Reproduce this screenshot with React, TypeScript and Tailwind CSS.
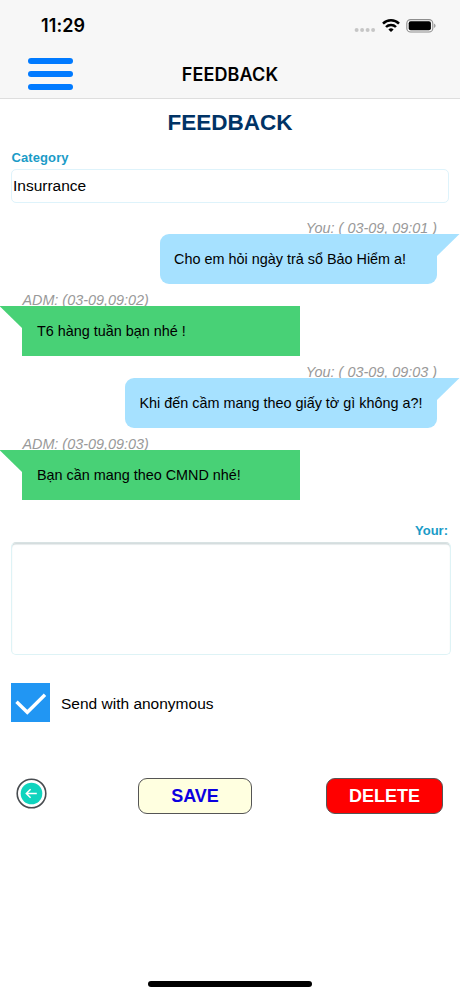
import { useState } from 'react';
import clsx from 'clsx';

type Message = {
  id: number;
  from: 'you' | 'adm';
  caption: string;
  text: string;
};

const messages: Message[] = [
  { id: 1, from: 'you', caption: 'You: ( 03-09, 09:01 )', text: 'Cho em hỏi ngày trả sổ Bảo Hiểm a!' },
  { id: 2, from: 'adm', caption: 'ADM: (03-09,09:02)', text: 'T6 hàng tuần bạn nhé !' },
  { id: 3, from: 'you', caption: 'You: ( 03-09, 09:03 )', text: 'Khi đến cầm mang theo giấy tờ gì không a?!' },
  { id: 4, from: 'adm', caption: 'ADM: (03-09,09:03)', text: 'Bạn cần mang theo CMND nhé!' },
];

function StatusBar() {
  return (
    <div className="flex h-[50px] items-center justify-between pl-[41px] pr-[24px] pt-px">
      <span className="font-['Inter',sans-serif] text-[18px] font-semibold tracking-[0.1px]">11:29</span>
      <div className="flex items-center">
        <svg width="22" height="14" viewBox="0 0 22 14" fill="#c6c6c6">
          <circle cx="2.6" cy="11" r="2" />
          <circle cx="8.1" cy="11" r="2" />
          <circle cx="13.6" cy="11" r="2" />
          <circle cx="19.1" cy="11" r="2" />
        </svg>
        <svg className="ml-[6px]" width="18" height="14" viewBox="0 0 18 14" fill="none" stroke="#000" strokeWidth="2.5">
          <path d="M1 4.6a11.4 11.4 0 0 1 16 0" />
          <path d="M4 8a7 7 0 0 1 10 0" />
          <path d="M9 12.9 6.4 10.4a3.8 3.8 0 0 1 5.2 0z" fill="#000" stroke="none" />
        </svg>
        <svg className="ml-[6px]" width="30" height="14" viewBox="0 0 30 14">
          <rect x="0.8" y="0.6" width="26" height="12.4" rx="3.8" fill="none" stroke="#8e8e8e" strokeWidth="1.1" />
          <rect x="2.7" y="2.3" width="22.2" height="9" rx="2" fill="#000" />
          <path d="M28.2 4.6v4.4c1.8-.7 1.8-3.7 0-4.4z" fill="#8e8e8e" />
        </svg>
      </div>
    </div>
  );
}

function NavBar() {
  return (
    <div className="grid h-12 grid-cols-[1fr_auto_1fr] items-center">
      <button type="button" aria-label="Menu" className="ml-7 flex w-[45px] flex-col gap-[7px]">
        <span className="h-[6.3px] rounded-full bg-[#007aff]" />
        <span className="h-[6.3px] rounded-full bg-[#007aff]" />
        <span className="h-[6.3px] rounded-full bg-[#007aff]" />
      </button>
      <span className="font-['Inter',sans-serif] text-[18px] font-semibold tracking-[0.1px]">FEEDBACK</span>
    </div>
  );
}

function ChatMessage({ message }: { message: Message }) {
  const mine = message.from === 'you';

  return (
    <div className={clsx('flex h-[72px] flex-col', mine ? 'items-end pr-[23px]' : 'items-start pl-[22.4px]')}>
      <span className="h-[22px] whitespace-pre pt-[6px] text-[14.4px] leading-[20px] text-[#999] italic">
        {message.caption}
      </span>
      <div
        className={clsx(
          'relative flex h-[50px] min-w-[277.4px] items-center px-[14.5px] pt-px text-[14.4px] whitespace-nowrap',
          mine ? 'rounded-[9px] rounded-tr-none bg-[#a6e1ff]' : 'bg-[#48d176]',
        )}
      >
        {/* speech tail */}
        <svg
          className={clsx('absolute top-0', mine ? 'left-full -ml-px' : 'right-full -mr-px -scale-x-100')}
          width="24"
          height="22"
          viewBox="0 0 24 22"
          fill={mine ? '#a6e1ff' : '#48d176'}
        >
          <path d="M0 0h23.5L1 22H0z" />
        </svg>
        {message.text}
      </div>
    </div>
  );
}

export default function App() {
  const [anonymous, setAnonymous] = useState(true);
  const [feedback, setFeedback] = useState('');

  return (
    <div className="flex h-[996px] w-[460px] flex-col overflow-hidden bg-white font-['Liberation_Sans',Arial,sans-serif] text-black">
      <header className="h-[99px] border-b border-[#dedede] bg-[#f7f7f7]">
        <StatusBar />
        <NavBar />
      </header>

      <main className="flex flex-1 flex-col">
        <h1 className="mt-[9px] text-center text-[22.5px] leading-[30px] font-bold text-[#003366]">FEEDBACK</h1>

        <label className="mt-[11px] ml-[11.5px] text-[13px] leading-[18px] font-bold tracking-[0.1px] text-[#1a9bc7]">
          Category
        </label>
        <div className="mt-[2px] mr-[11px] ml-[11px] flex h-[34px] items-center rounded-[5px] border border-[#def3fb] px-px text-[15.5px]">
          Insurrance
        </div>

        <section className="mt-[9px]">
          {messages.map((m) => (
            <ChatMessage key={m.id} message={m} />
          ))}
        </section>

        <label className="mt-[21px] mr-[12px] text-right text-[13px] leading-[20px] font-bold text-[#1a9bc7]">Your:</label>
        <textarea
          value={feedback}
          onChange={(e) => setFeedback(e.target.value)}
          className="mt-[1px] mr-[9px] ml-[11px] h-[113px] shrink-0 resize-none rounded-[5px] border border-[#def3f6] border-t-[#d8e2e3] p-2 shadow-[inset_0_1.5px_1px_#d3dcdd] outline-none"
        />

        <div className="mt-[28px] ml-[11px] flex items-center gap-[11px]">
          <button
            type="button"
            role="checkbox"
            aria-label="Send with anonymous"
            aria-checked={anonymous}
            onClick={() => setAnonymous(!anonymous)}
            className={clsx('size-[39px]', anonymous ? 'bg-[#2196f3]' : 'border-2 border-gray-500')}
          >
            {anonymous && (
              <svg width="39" height="39" viewBox="0 0 39 39" fill="none" stroke="#fff" strokeWidth="3.4">
                <path d="M5.5 18.8 16.3 29.3 34 11.8" />
              </svg>
            )}
          </button>
          <span className="pt-[2px] text-[15.5px]">Send with anonymous</span>
        </div>

        <div className="mt-[56px] flex items-start pr-[17px] pl-4">
          <button type="button" aria-label="Back">
            <svg width="31" height="31" viewBox="0 0 31 31" fill="none">
              <circle cx="15.5" cy="15.5" r="14.3" fill="#fff" stroke="#484c50" strokeWidth="1.6" />
              <circle cx="15.5" cy="15.5" r="10.8" fill="#0fd4be" />
              <path d="M20.8 15.5H10.6M14.6 11.2l-4.3 4.3 4.3 4.3" stroke="#fff" strokeWidth="1.5" />
            </svg>
          </button>
          <button type="button" className="ml-[91px] h-[36px] w-[114px] rounded-[9px] border border-[#555] bg-[#ffffe0] pt-px text-[18px] font-bold text-[#0b00e0]">
            SAVE
          </button>
          <button type="button" className="ml-auto h-[36px] w-[117px] rounded-[9px] border border-[#555] bg-[#ff0000] pt-px text-[18px] font-bold text-white">
            DELETE
          </button>
        </div>
      </main>

      <div className="mb-[9px] h-[6px] w-[164px] self-center rounded-full bg-black" />
    </div>
  );
}
